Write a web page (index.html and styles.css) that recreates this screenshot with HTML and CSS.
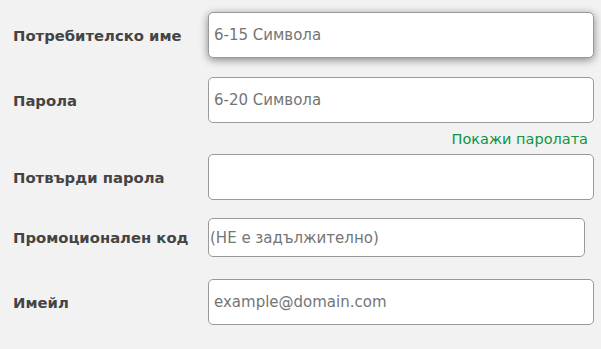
FILE: index.html
```html
<!DOCTYPE html>
<html lang="bg">
<head>
    <meta charset="UTF-8">
    <meta name="viewport" content="width=device-width, initial-scale=1.0">
    <title>Регистрация</title>
    <link rel="stylesheet" href="styles.css">
</head>
<body>
    <form class="signup">
        <div class="row row-user">
            <label for="username">Потребителско име</label>
            <input class="field focused" id="username" type="text" placeholder="6-15 Символа">
        </div>

        <div class="row row-pass">
            <label for="password">Парола</label>
            <input class="field" id="password" type="password" placeholder="6-20 Символа">
        </div>
        <div class="show-pass">
            <a href="#">Покажи паролата</a>
        </div>

        <div class="row row-confirm">
            <label for="confirm">Потвърди парола</label>
            <input class="field" id="confirm" type="password">
        </div>

        <div class="row row-promo">
            <label for="promo">Промоционален код</label>
            <input class="field short" id="promo" type="text" placeholder="(НЕ е задължително)">
        </div>

        <div class="row row-mail">
            <label for="email">Имейл</label>
            <input class="field" id="email" type="email" placeholder="example@domain.com">
        </div>
    </form>
</body>
</html>
```

FILE: styles.css
```css
body {
    margin: 0;
    background-color: #f2f2f2;
    font-family: "DejaVu Sans", Verdana, sans-serif;
}
.signup {
    display: flex;
    flex-direction: column;
    padding: 12px 0 0 13px;
}
.row {
    display: flex;
    align-items: center;
}
.row label {
    width: 195px;
    font-size: 14.8px;
    font-weight: bold;
    color: #444444;
}
.field {
    box-sizing: border-box;
    width: 386px;
    height: 46px;
    margin: 0;
    padding: 0 0 0 5px;
    border: 1px solid #999999;
    border-radius: 5px;
    background-color: #ffffff;
    font-family: "DejaVu Sans", Verdana, sans-serif;
    font-size: 15px;
    color: #333333;
    outline: none;
}
.field::placeholder {
    color: #757575;
}
.field.focused {
    box-shadow: 0 2px 8px rgba(0, 0, 0, 0.45);
}
.field.short {
    width: 377px;
    height: 39px;
    padding-left: 1px;
}
.row-pass {
    margin-top: 19px;
}
.show-pass {
    display: flex;
    justify-content: flex-end;
    width: 575px;
    height: 31px;
    align-items: center;
}
.show-pass a {
    font-size: 14.5px;
    color: #0f9440;
    text-decoration: none;
}
.row-promo {
    margin-top: 18px;
}
.row-mail {
    margin-top: 22px;
}
```
